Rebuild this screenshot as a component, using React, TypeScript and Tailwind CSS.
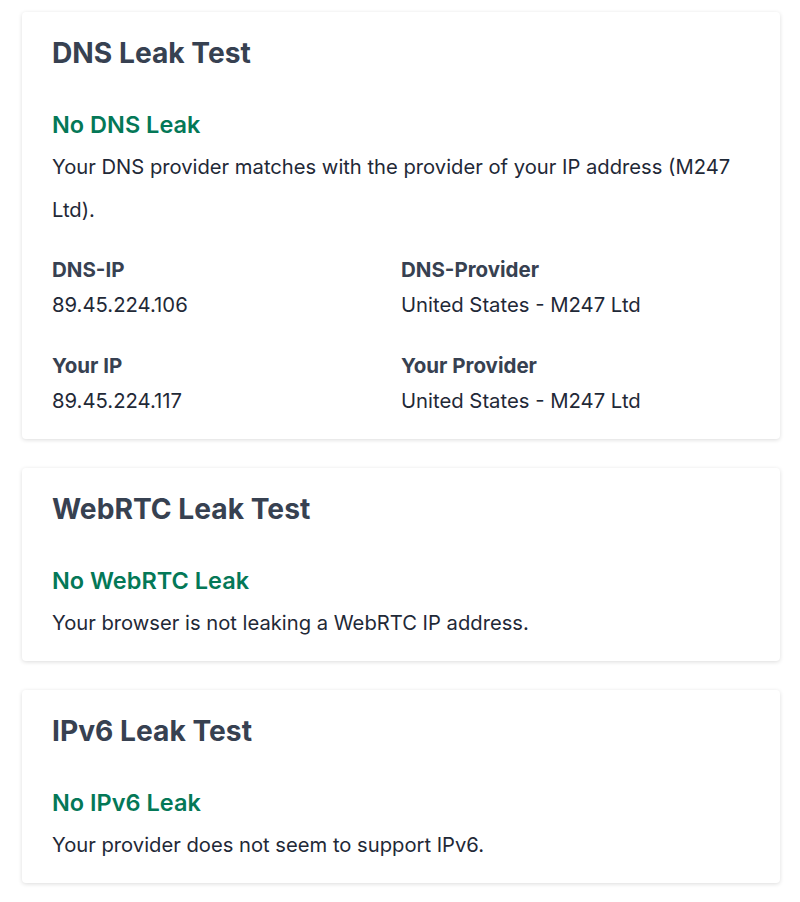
const font = { fontFamily: 'Inter, "Noto Sans", sans-serif' };

function Card({ title, status, children }: { title: string; status: string; children: React.ReactNode }) {
  return (
    <section className="rounded-[4px] bg-white px-[30px] pt-[23px] pb-[17px] shadow-[0_1px_4px_rgba(0,0,0,0.14)]">
      <h2 className="text-[28.2px] leading-[36px] font-bold text-[#374151]">{title}</h2>
      <h3 className="mt-[39px] text-[23.5px] leading-[30px] font-semibold text-[#047857]">{status}</h3>
      {children}
    </section>
  );
}

function Field({ label, value }: { label: string; value: string }) {
  return (
    <div>
      <div className="text-[20.5px] leading-[35px] font-bold text-[#374151]">{label}</div>
      <div className="text-[20.3px] leading-[35px] text-[#1f2937]">{value}</div>
    </div>
  );
}

export default function App() {
  return (
    <div className="min-h-screen bg-white pt-[12px] pl-[22px] pr-[20px] pb-[20px]" style={font}>
      <div className="flex flex-col gap-[29px]">
        <Card title="DNS Leak Test" status="No DNS Leak">
          <p className="mt-[5px] text-[20.2px] leading-[43px] text-[#1f2937]">
            Your DNS provider matches with the provider of your IP address (M247 Ltd).
          </p>
          <div className="mt-[21px] mb-[4px] grid grid-cols-2 gap-y-[26px]">
            <Field label="DNS-IP" value="89.45.224.106" />
            <Field label="DNS-Provider" value="United States - M247 Ltd" />
            <Field label="Your IP" value="89.45.224.117" />
            <Field label="Your Provider" value="United States - M247 Ltd" />
          </div>
        </Card>
        <Card title="WebRTC Leak Test" status="No WebRTC Leak">
          <p className="mt-[5px] text-[20.2px] leading-[43px] text-[#1f2937]">
            Your browser is not leaking a WebRTC IP address.
          </p>
        </Card>
        <Card title="IPv6 Leak Test" status="No IPv6 Leak">
          <p className="mt-[5px] text-[20.2px] leading-[43px] text-[#1f2937]">
            Your provider does not seem to support IPv6.
          </p>
        </Card>
      </div>
    </div>
  );
}
